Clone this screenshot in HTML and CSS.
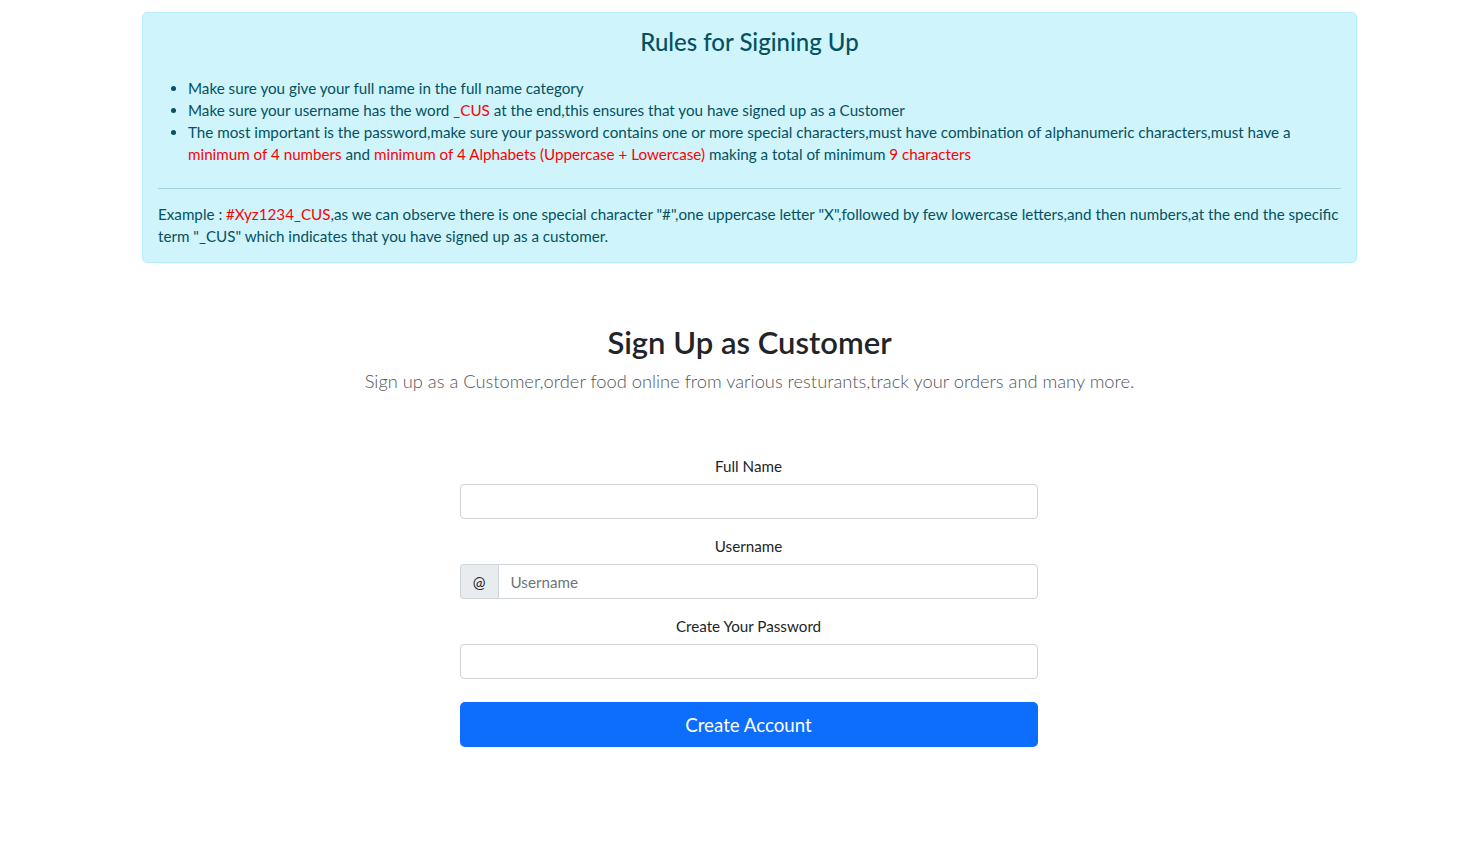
FILE: index.html
```html
<!DOCTYPE html>
<html lang="en">
<head>
<meta charset="utf-8">
<title>Sign Up as Customer</title>
<link rel="stylesheet" href="styles.css">
</head>
<body>
<div class="page">
  <div class="alert">
    <h3 class="alert-title">Rules for Sigining Up</h3>
    <ul class="rules">
      <li>Make sure you give your full name in the full name category</li>
      <li>Make sure your username has the word <span class="red">_CUS</span> at the end,this ensures that you have signed up as a Customer</li>
      <li>The most important is the password,make sure your password contains one or more special characters,must have combination of alphanumeric characters,must have a <span class="red">minimum of 4 numbers</span> and <span class="red">minimum of 4 Alphabets (Uppercase + Lowercase)</span> making a total of minimum <span class="red">9 characters</span></li>
    </ul>
    <hr class="divider">
    <p class="example">Example : <span class="red">#Xyz1234_CUS</span>,as we can observe there is one special character "#",one uppercase letter "X",followed by few lowercase letters,and then numbers,at the end the specific term "_CUS" which indicates that you have signed up as a customer.</p>
  </div>

  <div class="intro">
    <h2 class="title">Sign Up as Customer</h2>
    <p class="lead">Sign up as a Customer,order food online from various resturants,track your orders and many more.</p>
  </div>

  <form class="form">
    <div class="field">
      <label class="label" for="fullname">Full Name</label>
      <input class="input" id="fullname" type="text">
    </div>
    <div class="field">
      <label class="label" for="username">Username</label>
      <div class="group">
        <span class="addon">@</span>
        <input class="input group-input" id="username" type="text" placeholder="Username">
      </div>
    </div>
    <div class="field">
      <label class="label" for="password">Create Your Password</label>
      <input class="input" id="password" type="password">
    </div>
    <button class="btn" type="button">Create Account</button>
  </form>
</div>
</body>
</html>
```
FILE: styles.css
```css
* { box-sizing: border-box; }
html, body { margin: 0; padding: 0; background: #fff; }
body {
  font-family: Lato, "Open Sans", "Liberation Sans", sans-serif;
  font-size: 15.2px;
  line-height: 22px;
  color: #212529;
}
.page {
  width: 1215px;
  margin-left: 142px;
  padding-top: 12px;
}
.alert {
  background: #cff4fc;
  border: 1px solid #b6effb;
  border-radius: 5px;
  color: #055160;
  padding: 14px 15px 15px 15px;
}
.alert-title {
  margin: 0 0 20px;
  text-align: center;
  font-size: 24px;
  font-weight: 500;
  line-height: 30px;
}
.rules {
  margin: 0;
  padding-left: 30px;
}
.red { color: #ff0000; }
.divider {
  border: 0;
  border-top: 1px solid #9fd2dd;
  margin: 23px 0 14px;
}
.example { margin: 0; }

.intro {
  text-align: center;
  margin-top: 62px;
}
.title {
  margin: 0 0 8px;
  font-size: 31px;
  line-height: 35px;
  font-weight: 600;
  color: #212529;
}
.lead {
  margin: 0;
  font-size: 18.3px;
  line-height: 27px;
  font-weight: 300;
  color: #4f565c;
}
.form {
  width: 578px;
  margin: 60px auto 0 auto;
  position: relative;
  left: -1px;
}
.field {
  display: flex;
  flex-direction: column;
  margin-bottom: 16px;
}
.label {
  text-align: center;
  margin-bottom: 7px;
}
.input {
  height: 35px;
  width: 100%;
  border: 1px solid #ced4da;
  border-radius: 4px;
  padding: 6px 12px;
  font: inherit;
  color: #212529;
  background: #fff;
}
.input::placeholder { color: #6c757d; }
.group { display: flex; }
.addon {
  width: 38px;
  height: 35px;
  display: flex;
  align-items: center;
  justify-content: center;
  background: #e9ecef;
  border: 1px solid #ced4da;
  border-right: 0;
  border-radius: 4px 0 0 4px;
  color: #212529;
}
.group-input {
  flex: 1;
  border-radius: 0 4px 4px 0;
}
.btn {
  display: block;
  width: 100%;
  height: 45px;
  margin-top: 23px;
  border: 0;
  border-radius: 5px;
  background: #0d6efd;
  color: #fff;
  font-family: inherit;
  font-size: 18.7px;
}
```
